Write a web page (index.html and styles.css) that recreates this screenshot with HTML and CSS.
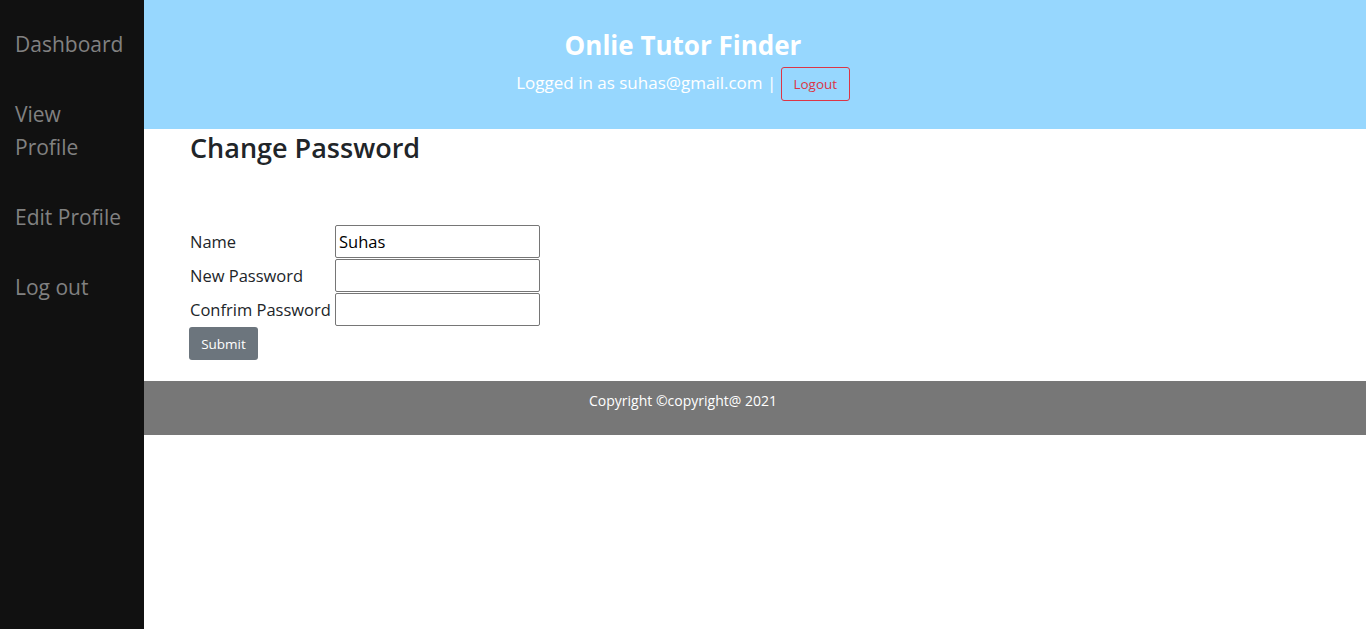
FILE: index.html
```html
<!DOCTYPE html>
<html>
<head>
<meta charset="utf-8">
<title>Change Password</title>
<link rel="stylesheet" href="styles.css">
</head>
<body>
<nav class="sidenav">
  <a href="#">Dashboard</a>
  <a href="#">View<br>Profile</a>
  <a href="#">Edit Profile</a>
  <a href="#">Log out</a>
</nav>
<header class="header">
  <h1 class="title">Onlie Tutor Finder</h1>
  <div class="user">Logged in as suhas@gmail.com | <button class="btn-logout">Logout</button></div>
</header>
<main class="content">
  <h2 class="heading">Change Password</h2>
  <form class="form">
    <label class="label">Name</label>
    <input class="input" type="text" value="Suhas">
    <label class="label">New Password</label>
    <input class="input" type="password">
    <label class="label">Confrim Password</label>
    <input class="input" type="password">
    <button class="btn-submit" type="button">Submit</button>
  </form>
</main>
<footer class="footer">Copyright ©copyright@ 2021</footer>
</body>
</html>
```
FILE: styles.css
```css
* { box-sizing: border-box; }
html, body { margin: 0; padding: 0; }
body {
  font-family: "Segoe UI", "Open Sans", "Noto Sans", sans-serif;
  color: #212529;
  background: #fff;
}
.sidenav {
  position: fixed;
  top: 0;
  left: 0;
  width: 144px;
  height: 100%;
  background: #111111;
  padding-top: 11px;
  z-index: 2;
}
.sidenav a {
  display: block;
  padding: 17px 8px 20px 15px;
  font-size: 21px;
  line-height: 33px;
  color: #818181;
  text-decoration: none;
}
.header {
  background: #97d7fe;
  height: 129px;
  text-align: center;
  color: #fff;
  padding-top: 27px;
}
.title {
  margin: 0;
  font-size: 26px;
  font-weight: 700;
  line-height: 36px;
}
.user {
  margin-top: 3px;
  font-size: 17px;
  line-height: 34px;
}
.btn-logout {
  font-family: inherit;
  font-size: 13.5px;
  color: #dc3545;
  background: transparent;
  border: 1px solid #dc3545;
  border-radius: 3px;
  height: 34px;
  width: 69px;
  padding: 0;
  vertical-align: middle;
}
.content {
  padding-left: 190px;
  padding-bottom: 21px;
}
.heading {
  margin: 0;
  font-size: 27px;
  font-weight: 600;
  line-height: 38px;
}
.form {
  margin-top: 58px;
  display: grid;
  grid-template-columns: 145px 205px;
  row-gap: 1px;
  align-items: center;
}
.label {
  font-size: 16.5px;
  white-space: nowrap;
}
.input {
  width: 205px;
  height: 33px;
  border: 1px solid #767676;
  border-radius: 2px;
  font-family: inherit;
  font-size: 16.5px;
  padding: 0 3px;
  color: #000;
}
.btn-submit {
  grid-column: 1;
  justify-self: start;
  margin-left: -1px;
  width: 69px;
  height: 33px;
  background: #6c757d;
  color: #fff;
  border: none;
  border-radius: 3px;
  font-family: inherit;
  font-size: 13.5px;
  padding: 0;
}
.footer {
  background: #777777;
  height: 54px;
  color: #fff;
  text-align: center;
  font-size: 14px;
  padding-top: 10px;
}
```
